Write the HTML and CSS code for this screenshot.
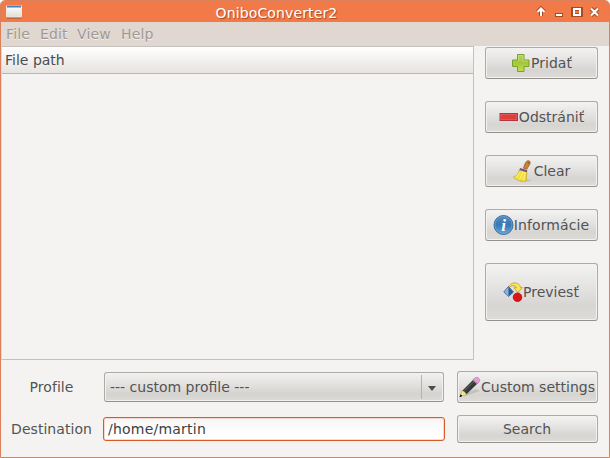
FILE: index.html
```
<!DOCTYPE html>
<html lang="sk">
<head>
<meta charset="utf-8">
<title>OniboConverter2</title>
<link rel="stylesheet" href="styles.css">
</head>
<body>
<div class="window">
  <header class="titlebar">
    <svg class="app-icon" width="16" height="14" viewBox="0 0 16 14"><defs><linearGradient id="app" x2="0" y2="1"><stop stop-color="#fff"/><stop offset="1" stop-color="#dededb"/></linearGradient></defs><path d="M1 12.700h14" stroke="#9d5131" stroke-width="1.500"/><rect x=".5" y=".5" width="15" height="11.500" rx=".7" fill="url(#app)" stroke="#eee9e5"/><path d="M1 1.500h14" stroke="#4b7fb8" stroke-width="2"/></svg>
    <h1 class="title">OniboConverter2</h1>
    <svg class="controls" width="68" height="14" viewBox="0 0 68 14"><g fill="none" stroke="#a64b25" stroke-width="4"><path d="M5 11V4M1.500 7L5 3.500 8.500 7M19 10h8M37 4h8v6h-8zM55 3.500l7 7M62 3.500l-7 7"/></g><g fill="none" stroke="#fff" stroke-width="2"><path d="M5 11V4M1.500 7L5 3.500 8.500 7M20 10h6M38 4h6v6h-6zM55 3.500l7 7M62 3.500l-7 7"/></g></svg>
  </header>
  <nav class="menubar"><span class="m-file">File</span><span class="m-edit">Edit</span><span class="m-view">View</span><span>Help</span></nav>
  <main class="main">
    <section class="list"><div class="list-head">File path</div></section>
    <aside class="actions">
      <button class="button"><svg width="20" height="20" viewBox="0 0 20 20"><defs><linearGradient id="plus" x2="0" y2="1"><stop stop-color="#b5d35a"/><stop offset=".5" stop-color="#a4c735"/><stop offset="1" stop-color="#c5df50"/></linearGradient></defs><path d="M6.500 1.500h6.500v5.500h5v6.500h-5v5H6.500v-5H1.500V7h5z" fill="url(#plus)" stroke="#75a331" stroke-linejoin="round"/><path d="M7.500 7.900V2.500H12V8h5" fill="none" stroke="#d2e68d" stroke-width=".6"/></svg><span>Pridať</span></button>
      <button class="button"><svg width="20" height="20" viewBox="0 0 20 20"><rect x="1" y="6.500" width="17.500" height="7" fill="#d94040" stroke="#b93439"/><rect x="2" y="7.500" width="15.500" height="5" fill="none" stroke="#e4605f" stroke-width=".7"/></svg><span>Odstrániť</span></button>
      <button class="button"><svg class="broom" width="24" height="24" viewBox="0 0 24 24"><ellipse cx="15" cy="21.500" rx="6" ry="1.500" fill="#aaa" opacity=".45"/><path d="M16.500 2.500c1.500-1.800 4.300-.5 3.600 1.800-.5 2-2.300 3.700-3.200 5.900l-3.400-1c.8-2.500 1.200-4.700 3-6.700z" fill="#c8813a" stroke="#94602b" stroke-width=".8"/><path d="M9.500 10.500l7.500 2-1 9.500c-4 .7-9-.5-12.500-3.800 3.500-1.500 5.500-4 6-7.700z" fill="#f2df3d" stroke="#c7ac24" stroke-width=".8"/><path d="M10 13l-4 5.500M13 13l-3.500 7.500M15 13l-1.500 8.500" stroke="#fff477" fill="none"/><path d="M9.800 10l7.200 2.200" stroke="#765087" stroke-width="2"/><circle cx="18.500" cy="3.700" r=".8" fill="#76501d"/></svg><span>Clear</span></button>
      <button class="button"><svg class="info" width="21" height="22" viewBox="0 0 21 22"><defs><linearGradient id="info" x2="0" y2="1"><stop stop-color="#568dbe"/><stop offset=".5" stop-color="#3877b4"/><stop offset="1" stop-color="#68a5d8"/></linearGradient></defs><circle cx="10.500" cy="11" r="9.500" fill="url(#info)" stroke="#376d9e"/><circle cx="10.500" cy="11" r="8.500" fill="none" stroke="#78aad4" stroke-width=".6"/><text x="10.500" y="17" class="info-letter">i</text></svg><span>Informácie</span></button>
      <button class="button convert"><svg width="20" height="20" viewBox="0 0 20 20"><path d="M5.500 4.500l5 5.500-5 4.500L.8 10z" fill="#7aa5d3" stroke="#294d78" stroke-width=".8"/><path d="M5.500 5v9.500L1.300 10z" fill="#8fb3dc"/><path d="M5.500 5l4.500 5-4.500 4z" fill="#295c9c"/><path d="M6.500 3.500c3-4 10-3.500 11 2h1.800L15 10.500 10.800 5.700h2.700C12.500 3.500 10 3 7 4.700z" fill="#fae552" stroke="#bd9c22" stroke-width=".8" stroke-linejoin="round"/><circle cx="14.500" cy="15.200" r="4.300" fill="#dc1616" stroke="#a80e0e" stroke-width=".8"/></svg><span>Previesť</span></button>
    </aside>
  </main>
  <footer class="form">
    <label class="label">Profile</label>
    <div class="combo"><span>--- custom profile ---</span><i class="divider"></i><i class="arrow"></i></div>
    <button class="button"><svg width="22" height="22" viewBox="0 0 22 22"><path d="M5 18l12-5 4 2-15 5z" fill="#888" opacity=".3"/><path d="M3 15L15 3l4 4L7 18.800 1.500 20.500z" fill="#373a38"/><path d="M2.800 14.800c2 0 4 2 4.500 4L1.300 20.500z" fill="#f4e77f" stroke="#bfb458" stroke-width=".5"/><path d="M1.800 18.800l1 1-1.800 1z" fill="#171a15" stroke="#171a15"/><path d="M5.500 14.500L16 4.500" stroke="#656965" stroke-width="1"/><path d="M14 3.500l4.500 4" stroke="#999c99" stroke-width="2"/><path d="M15.500 2.500c2-3 7 .5 4.500 3.500l-1.500 1.500-4.500-4z" fill="#e3a0d4" stroke="#ac6c9d" stroke-width=".6"/></svg><span>Custom settings</span></button>
    <label class="label" for="dest">Destination</label>
    <input class="entry" id="dest" value="/home/martin">
    <button class="button search">Search</button>
  </footer>
</div>
</body>
</html>
```
FILE: styles.css
```
* { box-sizing: border-box; }
body { margin: 0; background: #fff; font: 14px/18px "DejaVu Sans", sans-serif; color: #535353; overflow: hidden; }
.window { width: 610px; height: 458px; border: 1px solid #dc7f5b; border-radius: 5px 5px 0 0; background: #f4f3f2; overflow: hidden; display: flex; flex-direction: column; }
.titlebar { height: 21px; background: #f17a48; display: grid; grid-template-columns: 66px 1fr 73px; align-items: start; flex: none; }
.app-icon { margin: 4px 0 0 5px; }
.title { margin: 3px 0 0; padding-right: 50px; text-align: center; font: 14px/18px "DejaVu Sans", sans-serif; letter-spacing: .13px; color: #fff; text-shadow: 1px 1px 1px #a64b25; }
.controls { margin: 4px 0 0; }
.menubar { height: 24px; background: #dfd7d0; flex: none; display: flex; padding: 3px 0 0 5px; color: #a09993; text-shadow: 0 1px #f4efeb; letter-spacing: .15px; }
.m-file { width: 34px; }
.m-edit { width: 37px; }
.m-view { width: 44px; }
.main { height: 314px; flex: none; display: flex; }
.list { width: 473px; height: 314px; border: 1px solid #c5c1bc; border-left-color: #dedbd8; }
.list-head { height: 27px; padding: 4px 3px; border-bottom: 1px solid #bab5b0; background: linear-gradient(#fff, #e6e3e0); color: #4c4c4c; }
.actions { margin: 1px 0 0 11px; width: 113px; display: flex; flex-direction: column; gap: 22px; }
.button { height: 32px; width: 100%; padding: 0; border: 1px solid #aeaba6; border-bottom-color: #94918d; border-radius: 3px; background: linear-gradient(#f3f3f2, #e0dfdd 52%, #d6d5d2 75%, #dddcd9); box-shadow: inset 0 0 0 1px #f2f1ef; color: #535353; font: 14px/18px "DejaVu Sans", sans-serif; display: flex; align-items: center; justify-content: center; white-space: nowrap; }
.button svg { flex: none; }
.broom { margin-left: -3px; }
.info { margin-left: -1px; }
.info + span { letter-spacing: .1px; }
.convert { height: 58px; padding-right: 1px; }
.info-letter { font: italic bold 17px "Liberation Serif", serif; fill: #fff; text-anchor: middle; }
.form { display: grid; grid-template-columns: 103px 340px 141px; column-gap: 0; grid-template-rows: 32px 28px; row-gap: 12px; margin-top: 11px; align-items: center; }
.form > .button { margin-left: 13px; width: 141px; padding-right: 1px; }
.label { text-align: center; padding-right: 2px; letter-spacing: .05px; }
.combo { height: 30px; border: 1px solid #aeaba6; border-bottom-color: #94918d; border-radius: 3px; background: linear-gradient(#f2f1f0, #dfdddb 52%, #d5d3d0 75%, #dddbd8); box-shadow: inset 0 0 0 1px #f2f1ef; display: flex; align-items: center; padding: 0 7px 0 5px; }
.divider { width: 1px; height: 24px; background: #b5b2ae; margin-left: auto; }
.arrow { margin: 3px 0 0 6px; border: 4px solid transparent; border-top: 5px solid #4c4c4c; border-bottom: 0; }
.entry { margin: 0 -1px; width: 342px; height: 24px; border: 1px solid #d45c2b; border-radius: 3px; padding: 0 4px; outline: 0; background: linear-gradient(#f5f5f5, #fff 70%); box-shadow: inset 0 0 0 1px #f9d9cb; font: 14px/18px "DejaVu Sans", sans-serif; letter-spacing: .22px; color: #3e3e3e; }
.form > .search { height: 28px; }
```
